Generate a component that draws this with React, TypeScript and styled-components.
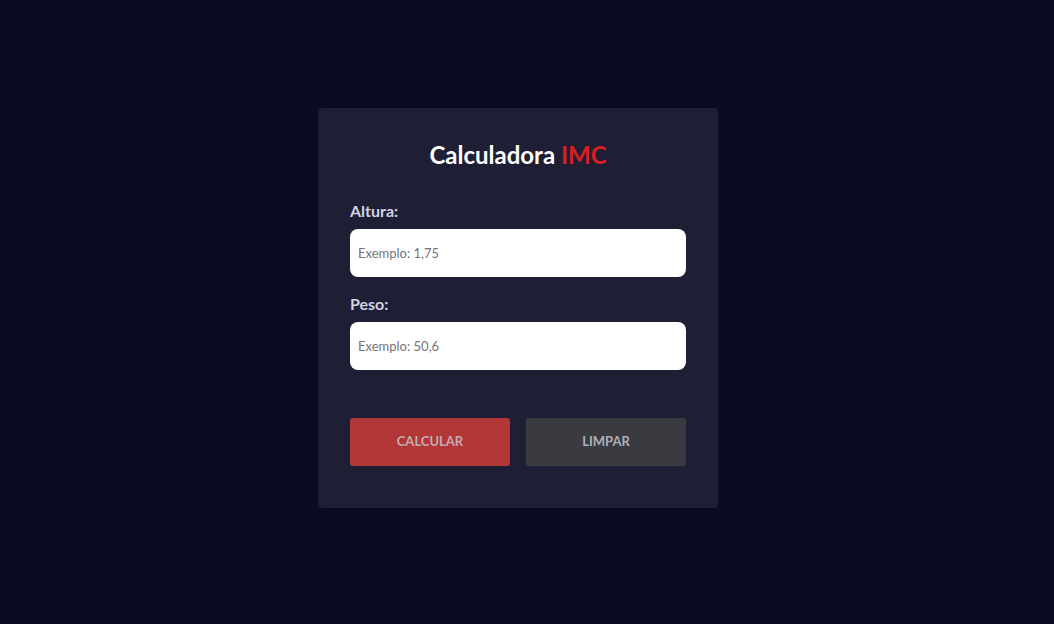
import React from "react";
import styled, { createGlobalStyle } from "styled-components";

const Global = createGlobalStyle`
  html, body { margin: 0; padding: 0; background: #0a0d21; }
  body { font-family: Lato, "Noto Sans", sans-serif; }
  * { box-sizing: border-box; }
`;

const Page = styled.main`
  width: 100%;
  height: 100vh;
  padding: 0 18px 8px 0;
  display: flex;
  align-items: center;
  justify-content: center;
`;

const Card = styled.section`
  width: 400px;
  height: 400px;
  background: #1e1f34;
  border-radius: 4px;
  padding: 32px;
  display: flex;
  flex-direction: column;
`;

const Title = styled.h1`
  margin: 0 0 32px;
  font-size: 24px;
  line-height: 30px;
  font-weight: 700;
  color: #ffffff;
  text-align: center;
`;

const Accent = styled.span`
  color: #d91e22;
`;

const Field = styled.div<{ $last?: boolean }>`
  display: flex;
  flex-direction: column;
  margin-bottom: ${(p) => (p.$last ? "48px" : "18px")};
`;

const Label = styled.label`
  font-size: 16px;
  line-height: 18px;
  font-weight: 700;
  color: #d2d3e3;
  margin-bottom: 9px;
`;

const Input = styled.input`
  height: 48px;
  width: 100%;
  border: none;
  border-radius: 8px;
  background: #ffffff;
  padding: 0 8px;
  font-family: Lato, "Noto Sans", sans-serif;
  font-size: 13px;
  color: #333;
  outline: none;
  &::placeholder { color: #75757b; }
`;

const Buttons = styled.div`
  display: grid;
  grid-template-columns: 1fr 1fr;
  gap: 16px;
`;

const Button = styled.button<{ $variant: "primary" | "secondary" }>`
  height: 48px;
  border: none;
  border-radius: 3px;
  padding: 0 0 2px;
  background: ${(p) => (p.$variant === "primary" ? "#b33736" : "#3a3a41")};
  color: ${(p) => (p.$variant === "primary" ? "#c4abb0" : "#aeb0b8")};
  font-family: Lato, "Noto Sans", sans-serif;
  font-size: 13px;
  font-weight: 700;
  text-transform: uppercase;
  cursor: pointer;
`;

export default function App() {
  return (
    <>
      <Global />
      <Page>
        <Card>
          <Title>
            Calculadora <Accent>IMC</Accent>
          </Title>
          <Field>
            <Label htmlFor="altura">Altura:</Label>
            <Input id="altura" placeholder="Exemplo: 1,75" />
          </Field>
          <Field $last>
            <Label htmlFor="peso">Peso:</Label>
            <Input id="peso" placeholder="Exemplo: 50,6" />
          </Field>
          <Buttons>
            <Button $variant="primary">Calcular</Button>
            <Button $variant="secondary">Limpar</Button>
          </Buttons>
        </Card>
      </Page>
    </>
  );
}
